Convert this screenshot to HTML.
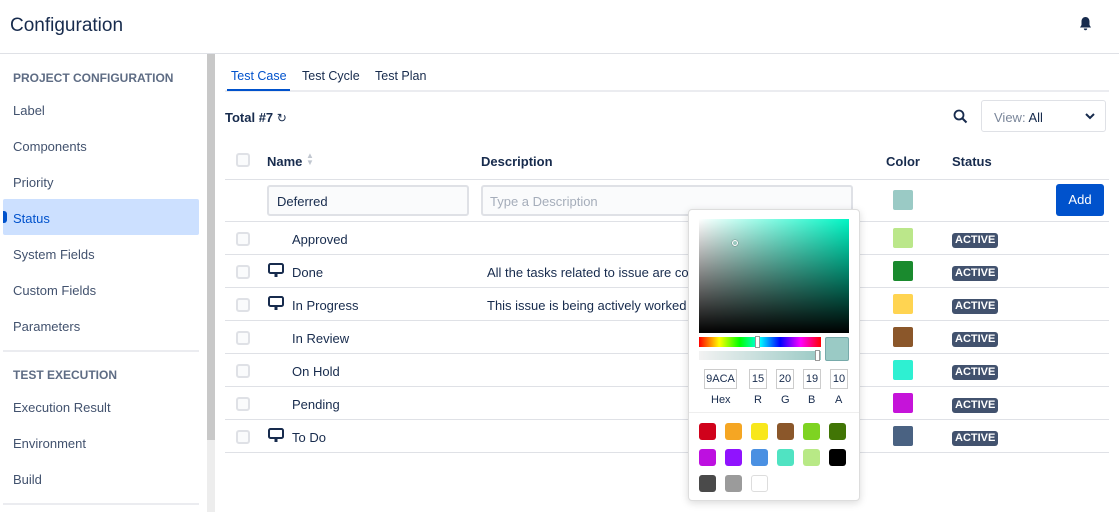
<!DOCTYPE html><html><head><style>
*{box-sizing:border-box;margin:0;padding:0}
body{width:1119px;height:512px;overflow:hidden;background:#fff;font-family:"Liberation Sans",sans-serif;color:#172b4d;position:relative;font-size:13px}
.a{position:absolute}
.hdr{left:0;top:0;width:1119px;height:54px;border-bottom:1px solid #dfe1e6}
.nav{left:13px;font-size:13px;color:#42526e}
.sec{left:13px;font-size:12px;font-weight:bold;color:#5e6c84}
.cb{width:14px;height:14px;border:2px solid #dfe1e6;border-radius:3px;background:#fafbfc;left:236px}
.line{left:225px;width:884px;height:1px;background:#dfe1e6}
.nm{left:292px;font-size:13px;color:#172b4d}
.sw{left:893px;width:20px;height:20px;border-radius:2px}
.act{left:952px;background:#42526e;color:#fff;font-size:11px;font-weight:bold;padding:1px 3px;border-radius:3px;line-height:13px}
.ic{left:268px}
.pin{width:18px;height:20px;border:1px solid #ccc;font-size:11px;text-align:center;line-height:18px;top:369px}
.lb{font-size:11px;top:394px}
.c{width:17px;height:17px;border-radius:3px}
</style></head><body>
<div class="a hdr"></div>
<div class="a" style="left:10px;top:15px;font-size:19px;color:#172b4d">Configuration</div>
<svg class="a" style="left:1079px;top:16px" width="13" height="16" viewBox="0 0 13 16"><path d="M6.5 1C4 1 2.5 3 2.5 5.5V9L1 11.5H12L10.5 9V5.5C10.5 3 9 1 6.5 1Z M4.8 12.5a1.7 1.7 0 0 0 3.4 0Z" fill="#172b4d"/></svg>
<div class="a" style="left:207px;top:54px;width:8px;height:386px;background:#c8c8c8"></div>
<div class="a" style="left:207px;top:440px;width:8px;height:72px;background:#ededed"></div>
<div class="a sec" style="top:71px">PROJECT CONFIGURATION</div>
<div class="a nav" style="top:103px">Label</div>
<div class="a nav" style="top:139px">Components</div>
<div class="a nav" style="top:175px">Priority</div>
<div class="a" style="left:3px;top:199px;width:196px;height:36px;background:#cce0ff;border-radius:2px"></div>
<div class="a" style="left:3px;top:211px;width:4px;height:12px;background:#0052cc;border-radius:0 3px 3px 0"></div>
<div class="a nav" style="top:211px;color:#0052cc">Status</div>
<div class="a nav" style="top:247px">System Fields</div>
<div class="a nav" style="top:283px">Custom Fields</div>
<div class="a nav" style="top:319px">Parameters</div>
<div class="a" style="left:3px;top:350px;width:196px;height:2px;background:#ebecf0"></div>
<div class="a sec" style="top:368px">TEST EXECUTION</div>
<div class="a nav" style="top:400px">Execution Result</div>
<div class="a nav" style="top:436px">Environment</div>
<div class="a nav" style="top:472px">Build</div>
<div class="a" style="left:3px;top:503px;width:196px;height:2px;background:#ebecf0"></div>

<div class="a" style="left:225px;top:90px;width:884px;height:2px;background:#ebecf0"></div>
<div class="a" style="left:227px;top:89px;width:63px;height:2px;background:#0052cc"></div>
<div class="a" style="left:231px;top:69px;color:#0052cc;font-size:12.5px">Test Case</div>
<div class="a" style="left:302px;top:69px;font-size:12.5px">Test Cycle</div>
<div class="a" style="left:375px;top:69px;font-size:12.5px">Test Plan</div>
<div class="a" style="left:225px;top:110px;font-weight:bold">Total #7 <span style="font-weight:normal;font-size:12px">↻</span></div>
<svg class="a" style="left:953px;top:109px" width="15" height="15" viewBox="0 0 15 15"><circle cx="6" cy="6" r="4.5" fill="none" stroke="#172b4d" stroke-width="1.8"/><path d="M9.5 9.5L13.5 13.5" stroke="#172b4d" stroke-width="2"/></svg>
<div class="a" style="left:981px;top:100px;width:125px;height:32px;border:1px solid #dfe1e6;border-radius:3px"></div>
<div class="a" style="left:994px;top:110px"><span style="color:#7a869a">View</span><span style="color:#7a869a">: </span>All</div>
<svg class="a" style="left:1085px;top:112px" width="10" height="8"><path d="M1 2L5 6L9 2" stroke="#172b4d" stroke-width="2" fill="none"/></svg>

<div class="a cb" style="top:153px"></div>
<div class="a" style="left:267px;top:154px;font-weight:bold">Name</div>
<div class="a" style="left:306px;top:152px;font-size:8px;color:#c1c7d0;line-height:7px">▲<br>▼</div>
<div class="a" style="left:481px;top:154px;font-weight:bold">Description</div>
<div class="a" style="left:886px;top:154px;font-weight:bold">Color</div>
<div class="a" style="left:952px;top:154px;font-weight:bold">Status</div>
<div class="a line" style="top:179px"></div>
<div class="a" style="left:267px;top:185px;width:202px;height:31px;border:2px solid #dfe1e6;border-radius:3px;background:#fafbfc;padding:7px 8px">Deferred</div>
<div class="a" style="left:481px;top:185px;width:372px;height:31px;border:2px solid #dfe1e6;border-radius:3px;background:#fafbfc;padding:7px 7px;color:#a5adba">Type a Description</div>
<div class="a sw" style="top:190px;background:#9acac5"></div>
<div class="a" style="left:1056px;top:184px;width:48px;height:32px;background:#0052cc;border-radius:3px;color:#fff;text-align:center;line-height:32px">Add</div>
<div class="a line" style="top:221px"></div>

<div class="a cb" style="top:232px"></div><div class="a nm" style="top:232px">Approved</div><div class="a sw" style="top:228px;background:#bbe78a"></div><div class="a act" style="top:233px">ACTIVE</div><div class="a line" style="top:254px"></div>
<div class="a cb" style="top:265px"></div><div class="a nm" style="top:265px">Done</div><div class="a" style="left:487px;top:265px">All the tasks related to issue are co</div><div class="a sw" style="top:261px;background:#1a8a2e"></div><div class="a act" style="top:266px">ACTIVE</div><div class="a line" style="top:287px"></div>
<div class="a cb" style="top:298px"></div><div class="a nm" style="top:298px">In Progress</div><div class="a" style="left:487px;top:298px">This issue is being actively worked</div><div class="a sw" style="top:294px;background:#ffd451"></div><div class="a act" style="top:299px">ACTIVE</div><div class="a line" style="top:320px"></div>
<div class="a cb" style="top:331px"></div><div class="a nm" style="top:331px">In Review</div><div class="a sw" style="top:327px;background:#8b572a"></div><div class="a act" style="top:332px">ACTIVE</div><div class="a line" style="top:353px"></div>
<div class="a cb" style="top:364px"></div><div class="a nm" style="top:364px">On Hold</div><div class="a sw" style="top:360px;background:#2ef0d2"></div><div class="a act" style="top:365px">ACTIVE</div><div class="a line" style="top:386px"></div>
<div class="a cb" style="top:397px"></div><div class="a nm" style="top:397px">Pending</div><div class="a sw" style="top:393px;background:#c514d9"></div><div class="a act" style="top:398px">ACTIVE</div><div class="a line" style="top:419px"></div>
<div class="a cb" style="top:430px"></div><div class="a nm" style="top:430px">To Do</div><div class="a sw" style="top:426px;background:#4a6282"></div><div class="a act" style="top:431px">ACTIVE</div><div class="a line" style="top:452px"></div>
<svg class="a ic" style="top:263px" width="17" height="16"><rect x="1" y="1" width="14" height="9" rx="1.5" fill="none" stroke="#172b4d" stroke-width="2"/><rect x="6.5" y="10" width="3" height="4" fill="#172b4d"/></svg>
<svg class="a ic" style="top:296px" width="17" height="16"><rect x="1" y="1" width="14" height="9" rx="1.5" fill="none" stroke="#172b4d" stroke-width="2"/><rect x="6.5" y="10" width="3" height="4" fill="#172b4d"/></svg>
<svg class="a ic" style="top:428px" width="17" height="16"><rect x="1" y="1" width="14" height="9" rx="1.5" fill="none" stroke="#172b4d" stroke-width="2"/><rect x="6.5" y="10" width="3" height="4" fill="#172b4d"/></svg>

<div class="a" style="left:688px;top:209px;width:172px;height:292px;background:#fff;border:1px solid #ddd;border-radius:4px;box-shadow:0 2px 8px rgba(0,0,0,.15)"></div>
<div class="a" style="left:699px;top:219px;width:150px;height:114px;background:linear-gradient(to top,#000,rgba(0,0,0,0)),linear-gradient(to right,#fff,#00f5c4)"></div>
<div class="a" style="left:732px;top:240px;width:6px;height:6px;border:1.5px solid #fff;border-radius:50%;box-shadow:0 0 1px #000"></div>
<div class="a" style="left:699px;top:337px;width:122px;height:10px;background:linear-gradient(to right,#f00,#ff0,#0f0,#0ff,#00f,#f0f,#f00)"></div>
<div class="a" style="left:755px;top:336px;width:5px;height:12px;background:#fff;border:1px solid #999"></div>
<div class="a" style="left:699px;top:351px;width:122px;height:9px;background:linear-gradient(to right,#f2f2f2,#9acac5)"></div>
<div class="a" style="left:815px;top:350px;width:5px;height:11px;background:#fff;border:1px solid #999"></div>
<div class="a" style="left:825px;top:337px;width:24px;height:24px;background:#9acac5;border:1px solid #7aa;border-radius:2px"></div>
<div class="a pin" style="left:704px;width:33px">9ACA</div>
<div class="a pin" style="left:749px">15</div>
<div class="a pin" style="left:776px">20</div>
<div class="a pin" style="left:803px">19</div>
<div class="a pin" style="left:830px">10</div>
<div class="a lb" style="left:711px">Hex</div><div class="a lb" style="left:754px">R</div><div class="a lb" style="left:781px">G</div><div class="a lb" style="left:808px">B</div><div class="a lb" style="left:835px">A</div>
<div class="a" style="left:689px;top:412px;width:170px;height:1px;background:#eee"></div>
<div class="a c" style="left:699px;top:423px;background:#d0021b"></div><div class="a c" style="left:725px;top:423px;background:#f5a623"></div><div class="a c" style="left:751px;top:423px;background:#f8e71c"></div><div class="a c" style="left:777px;top:423px;background:#8b572a"></div><div class="a c" style="left:803px;top:423px;background:#7ed321"></div><div class="a c" style="left:829px;top:423px;background:#417505"></div>
<div class="a c" style="left:699px;top:449px;background:#bd10e0"></div><div class="a c" style="left:725px;top:449px;background:#9013fe"></div><div class="a c" style="left:751px;top:449px;background:#4a90e2"></div><div class="a c" style="left:777px;top:449px;background:#50e3c2"></div><div class="a c" style="left:803px;top:449px;background:#b8e986"></div><div class="a c" style="left:829px;top:449px;background:#000"></div>
<div class="a c" style="left:699px;top:475px;background:#4a4a4a"></div><div class="a c" style="left:725px;top:475px;background:#9b9b9b"></div><div class="a c" style="left:751px;top:475px;background:#fff;border:1px solid #ddd"></div>
</body></html>
